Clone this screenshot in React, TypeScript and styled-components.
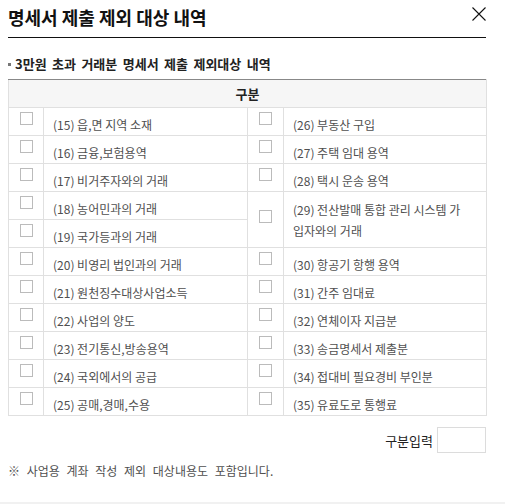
import styled, {createGlobalStyle} from "styled-components";

const GlobalStyle = createGlobalStyle`
    html, body {
        margin: 0;
        padding: 0;
        background: #fff;
    }
    body {
        font-family: "Noto Sans CJK KR", "Noto Sans", sans-serif;
        color: #222;
    }
`

interface Item {
    no: number;
    label: string;
}

const leftItems: Item[] = [
    {no: 15, label: '읍,면 지역 소재'},
    {no: 16, label: '금융,보험용역'},
    {no: 17, label: '비거주자와의 거래'},
    {no: 18, label: '농어민과의 거래'},
    {no: 19, label: '국가등과의 거래'},
    {no: 20, label: '비영리 법인과의 거래'},
    {no: 21, label: '원천징수대상사업소득'},
    {no: 22, label: '사업의 양도'},
    {no: 23, label: '전기통신,방송용역'},
    {no: 24, label: '국외에서의 공급'},
    {no: 25, label: '공매,경매,수용'},
];

// null = covered by the rowSpan of the previous row
const rightItems: (Item | null)[] = [
    {no: 26, label: '부동산 구입'},
    {no: 27, label: '주택 임대 용역'},
    {no: 28, label: '택시 운송 용역'},
    {no: 29, label: '전산발매 통합 관리 시스템 가입자와의 거래'},
    null,
    {no: 30, label: '항공기 항행 용역'},
    {no: 31, label: '간주 임대료'},
    {no: 32, label: '연체이자 지급분'},
    {no: 33, label: '송금명세서 제출분'},
    {no: 34, label: '접대비 필요경비 부인분'},
    {no: 35, label: '유료도로 통행료'},
];

const itemText = (item: Item) => `(${item.no}) ${item.label}`;

export default function App() {
    return <>
        <GlobalStyle/>
        <Popup>
            <Header>
                <Title>명세서 제출 제외 대상 내역</Title>
                <CloseButton aria-label="닫기">
                    <svg width="14" height="14" viewBox="0 0 14 14">
                        <path d="M0.5 0.5 L13.5 13.5 M13.5 0.5 L0.5 13.5" stroke="#111" strokeWidth="1.1" fill="none"/>
                    </svg>
                </CloseButton>
            </Header>
            <SubTitle>3만원 초과 거래분 명세서 제출 제외대상 내역</SubTitle>
            <Table>
                <colgroup>
                    <col style={{width: 35}}/>
                    <col style={{width: 204}}/>
                    <col style={{width: 36}}/>
                    <col style={{width: 203}}/>
                </colgroup>
                <thead>
                <tr>
                    <HeadCell colSpan={4}>구분</HeadCell>
                </tr>
                </thead>
                <tbody>
                {leftItems.map((left, i) => {
                    const right = rightItems[i];
                    const tall = right !== null && rightItems[i + 1] === null;
                    return <Row key={left.no}>
                        <CheckCell><Check type="checkbox"/></CheckCell>
                        <TextCell>{itemText(left)}</TextCell>
                        {right && <>
                            <CheckCell rowSpan={tall ? 2 : 1}><Check type="checkbox"/></CheckCell>
                            <TextCell rowSpan={tall ? 2 : 1} $tall={tall}>{itemText(right)}</TextCell>
                        </>}
                    </Row>
                })}
                </tbody>
            </Table>
            <InputRow>
                <InputLabel>구분입력</InputLabel>
                <CodeInput type="text"/>
            </InputRow>
            <Note>※ 사업용 계좌 작성 제외 대상내용도 포함입니다.</Note>
        </Popup>
        <Footer/>
    </>
}

const Popup = styled.div`
    padding: 0 19px 0 8px;
`

const Header = styled.div`
    display: flex;
    justify-content: space-between;
    align-items: flex-start;
    padding-top: 5px;
    height: 32px;
    border-bottom: 1px solid #111;
`

const Title = styled.h1`
    margin: 0;
    font-size: 18px;
    line-height: 24px;
    font-weight: 700;
    color: #111;
`

const CloseButton = styled.button`
    margin-top: 2px;
    padding: 0;
    border: 0;
    background: none;
    width: 14px;
    height: 14px;
    display: flex;
    cursor: pointer;
`

const SubTitle = styled.h2`
    margin: 17px 0 6px;
    font-size: 13px;
    line-height: 18px;
    font-weight: 700;
    color: #222;
    word-spacing: 2.5px;

    &::before {
        content: '';
        display: inline-block;
        width: 3px;
        height: 3px;
        background: #777;
        vertical-align: middle;
        margin: 0 4px 2px 0;
    }
`

const Table = styled.table`
    width: 100%;
    table-layout: fixed;
    border-collapse: collapse;
    border-top: 1px solid #888;
    border-left: 1px solid #e0e0e0;
    border-right: 1px solid #e0e0e0;
`

const HeadCell = styled.th`
    height: 27px;
    padding: 0;
    background: #f6f6f6;
    border-bottom: 1px solid #e0e0e0;
    font-size: 13px;
    font-weight: 700;
    color: #222;
    text-align: center;
`

const Row = styled.tr`
    height: 28px;
`

const CheckCell = styled.td`
    padding: 0 0 6px;
    text-align: center;
    vertical-align: middle;
    border: 1px solid #e0e0e0;
`

const Check = styled.input`
    appearance: none;
    display: block;
    margin: 0 auto;
    width: 13px;
    height: 13px;
    border: 1px solid #bbb;
    background: #fff;
    border-radius: 0;
    box-sizing: border-box;
`

const TextCell = styled.td<{ $tall?: boolean }>`
    padding: ${p => p.$tall ? '1px 20px 0 9px' : '6px 20px 0 9px'};
    vertical-align: middle;
    border: 1px solid #e0e0e0;
    font-size: 12px;
    line-height: ${p => p.$tall ? '21px' : '20px'};
    color: #4f4f4f;
    word-break: break-all;
`

const InputRow = styled.div`
    display: flex;
    justify-content: flex-end;
    align-items: center;
    gap: 4px;
    margin-top: 11px;
`

const InputLabel = styled.span`
    font-size: 13px;
    color: #222;
`

const CodeInput = styled.input`
    width: 49px;
    height: 26px;
    box-sizing: border-box;
    border: 1px solid #dcdcdc;
    margin: 0;
    padding: 0 4px;
`

const Note = styled.p`
    margin: 9px 0 0;
    font-size: 12px;
    line-height: 18px;
    color: #4f4f4f;
    word-spacing: 4px;
`

const Footer = styled.div`
    margin-top: 22px;
    height: 2px;
    background: #f1f1f1;
`
